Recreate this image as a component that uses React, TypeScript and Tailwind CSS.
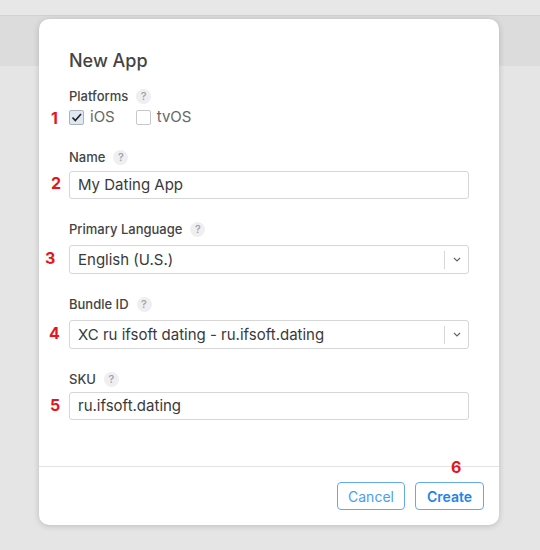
import React from "react";

const Help = () => (
  <span className="ml-2 inline-flex h-[15px] w-[15px] items-center justify-center rounded-full bg-[#efeff1] text-[11px] leading-none text-[#a0a0a5]">
    ?
  </span>
);

const Label = ({ children }: { children: React.ReactNode }) => (
  <div className="flex h-[16px] items-center text-[13px] font-medium leading-[16px] text-[#444]">
    {children}
    <Help />
  </div>
);

const Num = ({ n, className }: { n: string; className: string }) => (
  <span
    className={`absolute text-[16px] font-bold leading-none text-[#e8141c] ${className}`}
  >
    {n}
  </span>
);

const TextField = ({ value, top }: { value: string; top: string }) => (
  <div
    className={`${top} flex h-[28px] w-[400px] items-center rounded-[3px] border border-[#d6d6d6] px-[8px] text-[15px] leading-[20px] text-[#3a3a3a]`}
  >
    {value}
  </div>
);

const SelectField = ({ value }: { value: string }) => (
  <div className="mt-[8px] flex h-[29px] w-[400px] items-center rounded-[3px] border border-[#d6d6d6] text-[15px] leading-[20px] text-[#3a3a3a]">
    <span className="flex-1 px-[8px]">{value}</span>
    <span className="h-[18px] w-px bg-[#d8d8d8]" />
    <span className="flex w-[23px] justify-center">
      <svg width="8" height="5" viewBox="0 0 8 5" fill="none">
        <path d="M1 1l3 3 3-3" stroke="#666" strokeWidth="1.2" />
      </svg>
    </span>
  </div>
);

export default function App() {
  return (
    <div
      className="relative h-[550px] w-[540px] overflow-hidden bg-[#e5e5e5]"
      style={{ fontFamily: "Inter, 'Noto Sans', sans-serif" }}
    >
      <div className="h-[16px] border-b border-[#d2d2d2] bg-[#e7e7e7]" />
      <div className="h-[50px] bg-[#dcdcdc]" />

      <div className="absolute left-[39px] top-[19px] w-[460px] rounded-[10px] bg-white shadow-[0_1px_6px_rgba(0,0,0,0.18)]">
        <div className="px-[30px] pb-[46px] pt-[31px]">
          <h2 className="text-[18px] font-medium leading-[22px] text-[#444]">
            New App
          </h2>

          <div className="mt-[16px]">
            <Label>Platforms</Label>
            <div className="mt-[4px] flex h-[18px] items-center text-[15px] leading-[18px] text-[#666]">
              <span className="flex h-[15px] w-[15px] items-center justify-center rounded-[2px] border border-[#a9b3c2] bg-[#dfe7f2]">
                <svg width="11" height="9" viewBox="0 0 11 9" fill="none">
                  <path d="M1.5 4.5l2.8 3L10 1" stroke="#222" strokeWidth="1.7" />
                </svg>
              </span>
              <span className="ml-[6px]">iOS</span>
              <span className="ml-[21px] h-[15px] w-[15px] rounded-[2px] border border-[#c8c8c8] bg-white" />
              <span className="ml-[6px]">tvOS</span>
            </div>
          </div>

          <div className="mt-[23px]">
            <Label>Name</Label>
            <TextField value="My Dating App" top="mt-[6px]" />
          </div>

          <div className="mt-[22px]">
            <Label>Primary Language</Label>
            <SelectField value="English (U.S.)" />
          </div>

          <div className="mt-[22px]">
            <Label>Bundle ID</Label>
            <SelectField value="XC ru ifsoft dating - ru.ifsoft.dating" />
          </div>

          <div className="mt-[22px]">
            <Label>SKU</Label>
            <TextField value="ru.ifsoft.dating" top="mt-[5px]" />
          </div>
        </div>

        <div className="flex justify-end gap-[10px] border-t border-[#e3e3e3] px-[15px] pb-[15px] pt-[15px]">
          <button className="h-[28px] w-[68px] rounded-[4px] border border-[#64a9f0] text-[14px] text-[#4a9df0]">
            Cancel
          </button>
          <button className="h-[28px] w-[69px] rounded-[4px] border border-[#64a9f0] text-[14px] font-semibold text-[#1e84ea]">
            Create
          </button>
        </div>
      </div>

      <Num n="1" className="left-[51px] top-[110px]" />
      <Num n="2" className="left-[51px] top-[175px]" />
      <Num n="3" className="left-[45px] top-[250px]" />
      <Num n="4" className="left-[49px] top-[325px]" />
      <Num n="5" className="left-[50px] top-[397px]" />
      <Num n="6" className="left-[451px] top-[459px]" />
    </div>
  );
}
